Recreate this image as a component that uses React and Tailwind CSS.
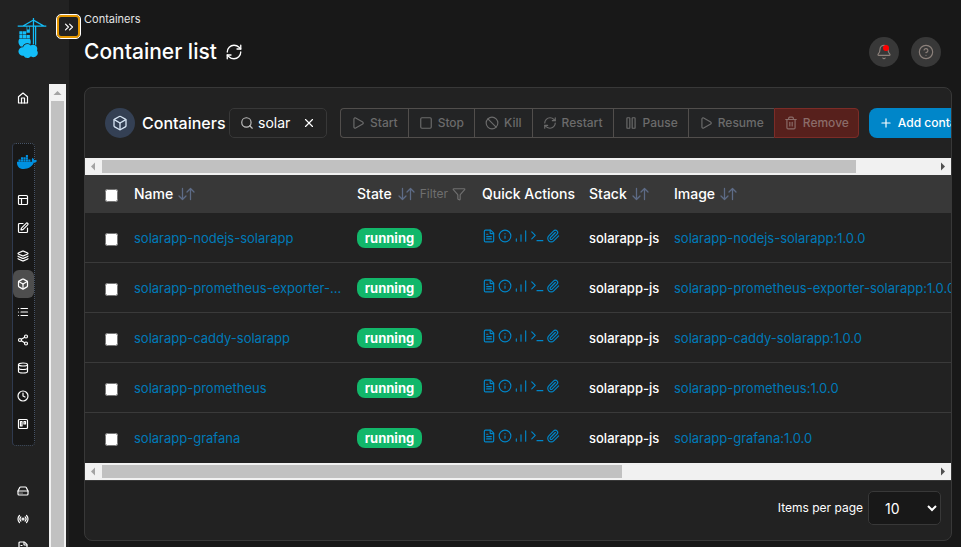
import { useState } from "react";
import {
  Ban, Bell, Box, ChevronsRight, CircleHelp, Clock, Database, FileText, Filter, HardDrive,
  Info, Layers, List, Paperclip, Pause, Play, Plus, Radio, RefreshCw, Search, Share2,
  Square, SquarePen, Trash2, Trello, X, PanelsTopLeft,
} from "lucide-react";
import { SiPortainer } from "react-icons/si";
import { FaDocker } from "react-icons/fa";

function HomeIcon({ className }) {
  return (
    <svg viewBox="0 0 24 24" fill="none" stroke="currentColor" strokeWidth="2.4" strokeLinecap="round" strokeLinejoin="round" className={className}>
      <path d="M3 9.500 12 2l9 7.500V22H3z" />
      <path d="M9 22V12h6v10" />
    </svg>
  );
}

function BarsIcon({ className }) {
  return (
    <svg viewBox="0 0 24 24" fill="none" stroke="currentColor" strokeWidth="2" strokeLinecap="round" className={className}>
      <path d="M20 21V3M12 21V10M4 21v-4" />
    </svg>
  );
}

function ConsoleIcon({ className }) {
  return (
    <svg viewBox="0 0 24 24" fill="none" stroke="currentColor" strokeWidth="2" strokeLinecap="round" strokeLinejoin="round" className={className}>
      <path d="m3 17 6-6-6-6M12 20h10" />
    </svg>
  );
}

function SortArrows() {
  return (
    <svg viewBox="0 0 18 14" fill="none" stroke="currentColor" strokeWidth="1.3" strokeLinecap="round" strokeLinejoin="round" className="h-3.5 w-[18px] text-[#5d6b86]">
      <path d="M5.500 1.500v11M2 9l3.500 3.500L9 9" />
      <path d="M13.500 12.500v-11M10 5l3.500-3.500L17 5" />
    </svg>
  );
}

function Arrow({ d, className }) {
  return (
    <svg viewBox="0 0 17 17" fill="currentColor" className={`size-[17px] shrink-0 ${className}`}>
      <path d={d} />
    </svg>
  );
}

function HorizontalScrollbar({ thumb }) {
  return (
    <div className="flex h-[17px] items-center bg-[#f1f1f1]">
      <Arrow d="M10 4.500v8l-4-4z" className="text-[#a3a3a3]" />
      <div className="h-full flex-1 py-0.5">
        <div className={`h-full bg-[#c1c1c1] ${thumb}`} />
      </div>
      <Arrow d="M7 4.500v8l4-4z" className="text-[#505050]" />
    </div>
  );
}

const environmentLinks = [
  ["Dashboard", PanelsTopLeft], ["Templates", SquarePen], ["Stacks", Layers], ["Containers", Box],
  ["Images", List], ["Networks", Share2], ["Volumes", Database], ["Events", Clock], ["Host", Trello],
];
const adminLinks = [["Environments", HardDrive], ["Registries", Radio], ["Logs", FileText]];

function NavLink({ label, icon: Icon, active }) {
  return (
    <a
      href="#"
      aria-label={label}
      className={`flex h-7 items-center justify-center rounded-md pr-px text-white ${active ? "bg-[#4e4e4e]" : ""}`}
    >
      <Icon className="size-3" strokeWidth={2.4} />
    </a>
  );
}

function Sidebar() {
  return (
    <aside className="flex w-[69px] shrink-0 flex-col bg-[#222]">
      <div className="h-[84px] shrink-0 pt-[18px] pl-3">
        <SiPortainer className="size-10 text-[#13bef9]" />
      </div>
      <div className="flex min-h-0 flex-1">
        <nav className="w-[49px] overflow-hidden pr-3.5 pl-3">
          <NavLink label="Home" icon={HomeIcon} />
          <div className="mt-[31px] rounded border border-dotted border-[#475467] border-l-[#2f3a4f] bg-[#181818] pb-[7px] [border-left-style:solid]">
            <div className="flex h-[42px] items-start pt-2 pl-1">
              <FaDocker className="size-5 shrink-0 text-[#0091e2]" />
            </div>
            {environmentLinks.map(([label, icon]) => (
              <NavLink key={label} label={label} icon={icon} active={label === "Containers"} />
            ))}
          </div>
          <div className="mt-[31px]">
            {adminLinks.map(([label, icon]) => (
              <NavLink key={label} label={label} icon={icon} />
            ))}
          </div>
        </nav>
        <div className="flex w-[17px] flex-col bg-[#f1f1f1]">
          <Arrow d="M4.500 11h8l-4-4z" className="text-[#a3a3a3]" />
          <div className="mx-0.5 flex-1 bg-[#c1c1c1]" />
        </div>
      </div>
    </aside>
  );
}

const actions = [["Start", Play], ["Stop", Square], ["Kill", Ban], ["Restart", RefreshCw], ["Pause", Pause], ["Resume", Play]];

function Toolbar() {
  const [query, setQuery] = useState("solar");
  return (
    <div className="flex h-[70px] items-center overflow-hidden pl-5">
      <span className="flex size-[30px] shrink-0 items-center justify-center rounded-full bg-[#344054] text-[#d5e3f2]">
        <Box className="size-4" strokeWidth={2} />
      </span>
      <h2 className="ml-[7px] w-[84px] shrink-0 text-base font-medium text-white">Containers</h2>
      <div className="ml-[3px] flex h-[30px] w-[98px] shrink-0 items-center rounded-[5px] border border-[#383838] pl-2.5">
        <Search className="size-3.5 shrink-0 text-[#c0c0c0]" />
        <input
          aria-label="Search containers"
          value={query}
          onChange={(event) => setQuery(event.target.value)}
          className="ml-1 w-11 bg-transparent text-sm text-white outline-none"
        />
        <button aria-label="Clear search" onClick={() => setQuery("")} className="text-white">
          <X className="size-3.5" />
        </button>
      </div>
      <div className="ml-[13px] flex shrink-0 text-xs font-medium">
        {actions.map(([label, Icon], index) => (
          <button
            key={label}
            disabled
            className={`flex h-[30px] items-center gap-[5px] border border-r-0 border-[#514e4c] bg-[#232425] px-2.5 text-[#6b6b6b] ${index === 0 ? "rounded-l" : ""}`}
          >
            <Icon className="size-3.5" strokeWidth={2} />
            {label}
          </button>
        ))}
        <button disabled className="flex h-[30px] items-center gap-[5px] rounded-r border border-[#7c2c27] bg-[#57201c] px-[9px] text-[#8b6c69]">
          <Trash2 className="size-3.5" strokeWidth={2} />
          Remove
        </button>
      </div>
      <button className="ml-2.5 flex h-[30px] shrink-0 items-center gap-[5px] rounded-lg bg-[#0086c9] px-2.5 text-xs font-medium text-white">
        <Plus className="size-3.5" strokeWidth={2} />
        Add container
      </button>
    </div>
  );
}

const containers = [
  ["solarapp-nodejs-solarapp", "solarapp-nodejs-solarapp:1.0.0"],
  ["solarapp-prometheus-exporter-...", "solarapp-prometheus-exporter-solarapp:1.0.0"],
  ["solarapp-caddy-solarapp", "solarapp-caddy-solarapp:1.0.0"],
  ["solarapp-prometheus", "solarapp-prometheus:1.0.0"],
  ["solarapp-grafana", "solarapp-grafana:1.0.0"],
];
const quickActions = [["Logs", FileText], ["Inspect", Info], ["Stats", BarsIcon], ["Console", ConsoleIcon], ["Attach", Paperclip]];

function ContainerTable() {
  return (
    <div className="overflow-hidden">
      <table className="w-[1250px] table-fixed border-separate border-spacing-0 text-left text-[13px] leading-5">
        <colgroup>
          <col className="w-[49px]" />
          <col className="w-[223px]" />
          <col className="w-[125px]" />
          <col className="w-[107px]" />
          <col className="w-[85px]" />
          <col />
        </colgroup>
        <thead>
          <tr className="h-[38px] bg-[#383838] text-sm text-white">
            <th className="pt-[3px] pl-5"><input type="checkbox" aria-label="Select all" className="block size-[13px]" /></th>
            <th className="font-medium"><span className="flex items-center gap-1">Name <SortArrows /></span></th>
            <th className="font-medium">
              <span className="flex items-center gap-[5px]">
                State <SortArrows />
                <button className="flex items-center gap-1 text-xs font-normal text-[#6f6f6f]">Filter <Filter className="size-3.5" strokeWidth={2} /></button>
              </span>
            </th>
            <th className="font-medium">Quick Actions</th>
            <th className="font-medium"><span className="flex items-center gap-1">Stack <SortArrows /></span></th>
            <th className="font-medium"><span className="flex items-center gap-1">Image <SortArrows /></span></th>
          </tr>
        </thead>
        <tbody>
          {containers.map(([name, image]) => (
            <tr key={name} className="h-[50px] *:border-b *:border-[#3a3a3a] last:*:border-[#222]">
              <td className="pt-1 pl-5"><input type="checkbox" aria-label={`Select ${name}`} className="block size-[13px]" /></td>
              <td><a href="#" className="text-[#007ab8]">{name}</a></td>
              <td><span className="flex h-5 w-[65px] items-center justify-center rounded-lg bg-[#12b76a] text-[13px] font-bold text-white">running</span></td>
              <td className="pb-1">
                <span className="flex items-center gap-0.5 text-[#0086c9]">
                  {quickActions.map(([label, Icon]) => (
                    <a key={label} href="#" aria-label={label}><Icon className="size-3.5" /></a>
                  ))}
                </span>
              </td>
              <td className="font-medium text-white">solarapp-js</td>
              <td className="whitespace-nowrap"><a href="#" className="text-[#007ab8]">{image}</a></td>
            </tr>
          ))}
        </tbody>
      </table>
    </div>
  );
}

export default function App() {
  return (
    <div className="relative flex h-screen overflow-hidden bg-[#181818] font-['Inter','Liberation_Sans',sans-serif] text-white">
      <Sidebar />
      <button aria-label="Expand sidebar" className="absolute top-3.5 left-14 flex size-[25px] items-center justify-center rounded-[5px] border border-white bg-[#222] ring-2 ring-[#e59700] ring-inset">
        <ChevronsRight className="size-3.5" />
      </button>
      <main className="min-w-0 flex-1 pr-[9px] pl-[15px]">
        <header className="flex h-[87px] justify-between pr-[11px]">
          <div className="pt-3">
            <a href="#" className="block text-[11px] leading-[14px] text-[#e4e4e4]">Containers</a>
            <div className="mt-2.5 flex items-center gap-2">
              <h1 className="text-[21px] leading-8 font-medium">Container list</h1>
              <button aria-label="Refresh"><RefreshCw className="size-[18px]" strokeWidth={1.75} /></button>
            </div>
          </div>
          <div className="flex gap-3 pt-[37px]">
            <button aria-label="Notifications" className="relative flex size-[30px] items-center justify-center rounded-full bg-[#383838] text-[#8c817b]">
              <Bell className="size-4" strokeWidth={1.75} />
              <span className="absolute top-2 right-[10px] size-1.5 rounded-full bg-[#f00]" />
            </button>
            <button aria-label="Help" className="flex size-[30px] items-center justify-center rounded-full bg-[#383838] text-[#8c817b]">
              <CircleHelp className="size-4" strokeWidth={1.75} />
            </button>
          </div>
        </header>
        <section className="overflow-hidden rounded-lg border border-[#383838] bg-[#222]">
          <Toolbar />
          <HorizontalScrollbar thumb="w-29/32" />
          <ContainerTable />
          <HorizontalScrollbar thumb="w-5/8" />
          <footer className="flex items-center justify-end gap-[5px] border-t border-[#383838] pt-2.5 pr-2.5 pb-[15px]">
            <label htmlFor="page-size" className="text-xs">Items per page</label>
            <select id="page-size" defaultValue="10" className="h-[34px] w-[73px] rounded-[5px] border border-[#383838] bg-[#181818] pl-3 text-sm text-white">
              <option>10</option>
              <option>25</option>
              <option>50</option>
            </select>
          </footer>
        </section>
      </main>
    </div>
  );
}
